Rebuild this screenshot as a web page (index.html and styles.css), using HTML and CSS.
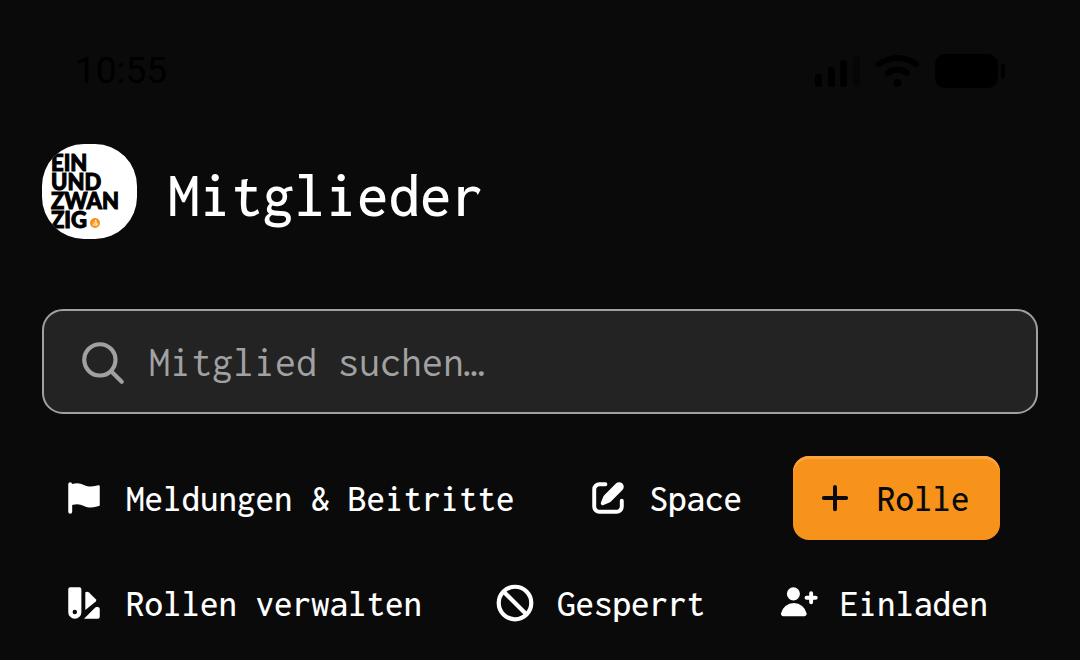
FILE: index.html
```
<!DOCTYPE html>
<html lang="de">
<head>
<meta charset="utf-8">
<meta name="viewport" content="width=device-width, initial-scale=1">
<title>Mitglieder</title>
<link rel="stylesheet" href="styles.css">
</head>
<body>
<div class="status">
  <time class="clock">10:55</time>
  <svg class="status-icons" width="192" height="34" viewBox="0 0 192 34" aria-hidden="true">
    <rect x="1" y="20" width="7" height="13" rx="3"/>
    <rect x="14" y="13" width="7" height="20" rx="3"/>
    <rect x="26" y="6" width="7" height="27" rx="3"/>
    <rect x="39" y="1" width="7" height="32" rx="3" opacity=".3"/>
    <g fill="none" stroke="#000" stroke-width="6" stroke-linecap="round">
      <path d="M65 10Q83.500-2 102 10"/>
      <path d="M74 19Q83.500 12 93 19"/>
    </g>
    <circle cx="83.500" cy="29" r="4"/>
    <rect x="121" y="0" width="63" height="34" rx="10"/>
    <path d="M187 9q4 1 4 4v8q0 3-4 4z"/>
  </svg>
</div>
<main class="page">
  <header class="head">
    <svg class="logo" viewBox="0 0 95 95" role="img" aria-label="Einundzwanzig">
      <g class="logo-text">
        <text x="9" y="27">EIN</text>
        <text x="9" y="46">UND</text>
        <text x="9" y="65">ZWAN</text>
        <text x="9" y="84">ZIG</text>
      </g>
      <circle cx="53" cy="79" r="5" fill="#f7931a"/>
      <path d="M50.500 81h5M51.500 79h3.500v2M53 76.500h1v2" fill="none" stroke="#fff"/>
    </svg>
    <h1 class="title">Mitglieder</h1>
  </header>
  <label class="search">
    <svg class="search-icon" viewBox="0 0 24 24" aria-hidden="true"><path d="m21 21-5.197-5.197m0 0A7.500 7.500 0 1 0 5.196 5.196a7.500 7.500 0 0 0 10.607 10.607Z"/></svg>
    <input class="search-input" type="search" placeholder="Mitglied suchen…" aria-label="Mitglied suchen">
  </label>
  <div class="actions">
    <button class="btn" type="button">
      <svg class="icon" viewBox="0 0 16 16" aria-hidden="true"><path d="M2.750 2a.75.75 0 0 0-.75.75v10.500a.75.75 0 0 0 1.500 0v-2.624l.33-.083A6.044 6.044 0 0 1 8 11c1.290.645 2.770.807 4.170.457l1.480-.37a.462.462 0 0 0 .35-.448V3.560a.438.438 0 0 0-.544-.425l-1.287.322C10.770 3.808 9.291 3.646 8 3a6.045 6.045 0 0 0-4.170-.457l-.34.085A.75.75 0 0 0 2.750 2Z"/></svg>
      <span class="btn-label">Meldungen &amp; Beitritte</span>
    </button>
    <button class="btn" type="button">
      <svg class="icon" viewBox="0 0 16 16" aria-hidden="true"><path d="M13.488 2.513a1.750 1.750 0 0 0-2.475 0L6.750 6.774a2.750 2.750 0 0 0-.596.892l-.848 2.047a.75.75 0 0 0 .98.98l2.047-.848a2.750 2.750 0 0 0 .892-.596l4.261-4.262a1.750 1.750 0 0 0 0-2.474Z"/><path d="M4.750 3.500c-.69 0-1.250.56-1.250 1.250v6.500c0 .69.56 1.250 1.250 1.250h6.500c.69 0 1.250-.56 1.250-1.250V9A.75.75 0 0 1 14 9v2.250A2.750 2.750 0 0 1 11.250 14h-6.500A2.750 2.750 0 0 1 2 11.250v-6.500A2.750 2.750 0 0 1 4.750 2H7a.75.75 0 0 1 0 1.500H4.750Z"/></svg>
      <span class="btn-label">Space</span>
    </button>
    <button class="btn btn-primary" type="button">
      <svg class="icon" viewBox="0 0 16 16" aria-hidden="true"><path d="M8 3.750v8.500M3.750 8h8.500" fill="none" stroke="currentColor" stroke-width="1.500" stroke-linecap="round"/></svg>
      <span class="btn-label">Rolle</span>
    </button>
    <button class="btn" type="button">
      <svg class="icon" viewBox="0 0 16 16" aria-hidden="true"><path fill-rule="evenodd" d="M2 2.750A.75.75 0 0 1 2.750 2h3.500a.75.75 0 0 1 .75.75v8.750a2.500 2.500 0 0 1-5 0ZM4.500 12.250a.85.85 0 1 0 0-1.700.85.85 0 0 0 0 1.700Z"/><path d="M8.500 10.700V3.900q.7-.5 1.400.1L12.500 6.600q.4.400 0 .8Z"/><path d="M8 14 12.300 9.700q.2-.2.500-.2h.45a.75.75 0 0 1 .75.75v3a.75.75 0 0 1-.75.75Z"/></svg>
      <span class="btn-label">Rollen verwalten</span>
    </button>
    <button class="btn" type="button">
      <svg class="icon" viewBox="0 0 16 16" aria-hidden="true"><path d="M3.700 3.700l8.600 8.600M14.200 8A6.200 6.200 0 1 1 1.800 8a6.200 6.200 0 0 1 12.400 0Z" fill="none" stroke="currentColor" stroke-width="1.600"/></svg>
      <span class="btn-label">Gesperrt</span>
    </button>
    <button class="btn" type="button">
      <svg class="icon" viewBox="0 0 16 16" aria-hidden="true"><path d="M8.750 4.500a2.500 2.500 0 1 1-5 0 2.500 2.500 0 0 1 5 0ZM10.400 13c.552 0 1.010-.452.9-.994a5.002 5.002 0 0 0-9.802 0c-.109.542.35.994.902.994h8ZM13 3.500a.75.75 0 0 1 .75.75v1h1a.75.75 0 0 1 0 1.500h-1v1a.75.75 0 0 1-1.500 0v-1h-1a.75.75 0 0 1 0-1.500h1v-1a.75.75 0 0 1 .75-.75Z"/></svg>
      <span class="btn-label">Einladen</span>
    </button>
  </div>
</main>
</body>
</html>
```
FILE: styles.css
```
* { box-sizing: border-box; }

body {
  margin: 0;
  background: #0a0a0a;
  color: #fff;
  font-family: Inconsolata, "Noto Sans Mono CJK SC", "DejaVu Sans Mono", monospace;
}

.status {
  display: flex;
  justify-content: space-between;
  align-items: center;
  padding: 50px 74px 0 75px;
  color: #000;
}

.clock {
  font: 37px/42px Roboto, sans-serif;
}

.page {
  padding: 52px 42px 15px;
}

.head {
  display: flex;
  align-items: center;
  gap: 31px;
  margin-bottom: 70px;
}

.logo {
  width: 95px;
  height: 95px;
  border-radius: 42px;
  background: #fff;
}

.logo-text {
  font: 900 22px Lato, sans-serif;
  fill: #000;
  stroke: #000;
}

.title {
  margin: 0;
  padding-top: 6px;
  font-size: 63px;
  font-weight: 500;
  line-height: 84px;
}

.search {
  display: flex;
  align-items: center;
  gap: 21px;
  height: 105px;
  margin-bottom: 42px;
  padding: 2px 34px 0;
  border: 2px solid #a1a1a1;
  border-radius: 21px;
  background: #232323;
}

.search-icon {
  flex: none;
  width: 50px;
  height: 50px;
  fill: none;
  stroke: #a1a1a1;
  stroke-width: 2;
  stroke-linecap: round;
}

.search-input {
  flex: 1;
  min-width: 0;
  padding: 0;
  border: 0;
  outline: 0;
  background: transparent;
  color: #fff;
  font: inherit;
  font-size: 42px;
  line-height: 63px;
}

.search-input::placeholder {
  color: #a1a1a1;
  opacity: 1;
}

.actions {
  display: flex;
  flex-wrap: wrap;
  gap: 21px;
}

.btn {
  display: flex;
  align-items: center;
  gap: 21px;
  height: 84px;
  padding: 0 30px 0 21px;
  border: 0;
  border-radius: 16px;
  background: transparent;
  color: #fff;
  font: inherit;
  font-size: 37px;
  font-weight: 500;
  line-height: 52px;
  white-space: nowrap;
}

.btn-label {
  padding-top: 2px;
}

.btn-primary {
  background: #f7931a;
  color: #0a0a0a;
  box-shadow: inset 0 3px 0 #f9a63f;
}

.icon {
  flex: none;
  width: 42px;
  height: 42px;
  fill: currentColor;
}
```
